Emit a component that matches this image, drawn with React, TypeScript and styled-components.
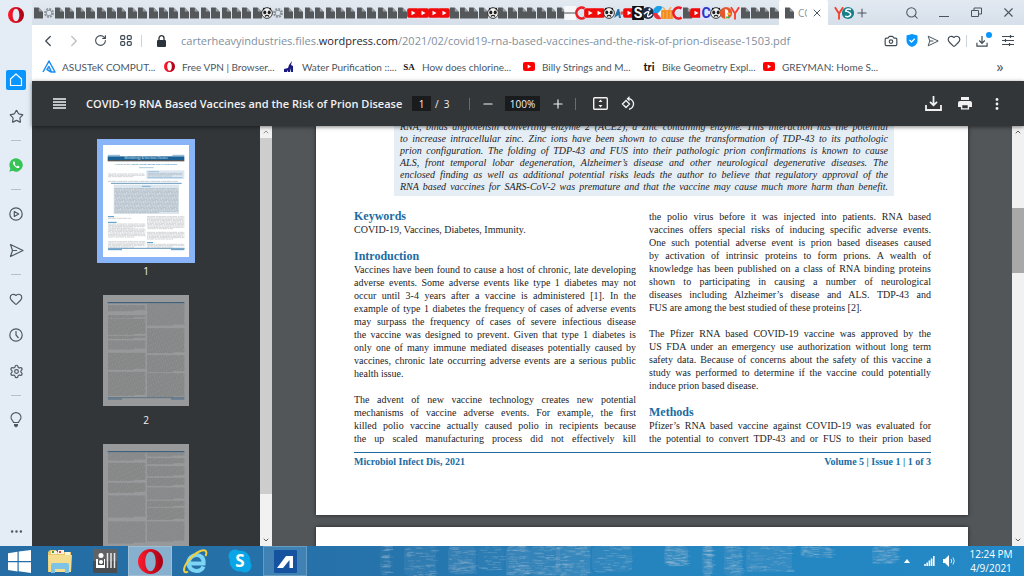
import React from "react";
import styled, { createGlobalStyle } from "styled-components";
import {
  Camera, Heart, Search, X, Minus, Plus, Settings, Star,
  ChevronLeft, ChevronRight, ChevronUp, ChevronDown, RotateCw, Ellipsis,
} from "lucide-react";

const Global = createGlobalStyle`
  * { box-sizing: border-box; }
  html, body, #root { height: 100%; margin: 0; }
  body { font-family: "Open Sans", "Noto Sans", sans-serif; overflow: hidden; }
  button { border: 0; padding: 0; background: none; color: inherit; font: inherit; display: flex; align-items: center; justify-content: center; }
  a { color: inherit; text-decoration: none; }
  svg { display: block; flex: none; }
`;

const Screen = styled.div`
  display: flex;
  flex-direction: column;
  height: 100vh;
  overflow: hidden;
`;
const Browser = styled.div`
  flex: 1;
  min-height: 0;
  display: flex;
  background: linear-gradient(#e2e9f1, #d6e0ea 25px, #e4edf6 60px);
`;

/* Side bar */
const SideBar = styled.nav`
  width: 32px;
  flex: none;
  display: flex;
  flex-direction: column;
  align-items: center;
  background: #e4edf6;
  color: #4c5863;
`;
const LogoButton = styled.button`
  height: 30px;
  width: 32px;
  margin-bottom: 32px;
`;
const SideButton = styled.button`
  height: 36px;
  width: 32px;
`;
const HomeTile = styled.span`
  width: 20px;
  height: 20px;
  border-radius: 2px;
  background: #0a96ff;
  display: grid;
  place-items: center;
`;
const SideRule = styled.hr`
  width: 10px;
  height: 1px;
  margin: 6px 0;
  border: 0;
  background: #b6c0c9;
`;
const MoreButton = styled(SideButton)`
  height: 30px;
  margin-top: auto;
`;

/* Window chrome */
const Content = styled.div`
  flex: 1;
  min-width: 0;
  display: flex;
  flex-direction: column;
`;
const TabStrip = styled.div`
  height: 25px;
  display: flex;
  align-items: stretch;
  color: #4b5560;
`;
const PackedTabs = styled.div`
  flex: 1;
  min-width: 0;
  display: grid;
  grid-template-columns: 416fr 330fr;
  padding-left: 1px;
`;
const TabGroup = styled.div`
  display: flex;
  min-width: 0;
`;
const MiniTab = styled.button`
  flex: 1;
  min-width: 0;
`;
const ActiveTab = styled.div`
  width: 49px;
  display: flex;
  align-items: center;
  padding: 0 5px;
  gap: 4px;
  background: #fff;
  border-radius: 2px 2px 0 0;
`;
const TabTitle = styled.span`
  width: 10px;
  overflow: hidden;
  white-space: nowrap;
  font-size: 10px;
  color: #8b949c;
`;
const TrailingTabs = styled.div`
  display: flex;
  width: 68px;
  padding-left: 6px;
  button { width: 9px; }
  button:last-child { width: 20px; }
`;
const WindowButton = styled.button`
  width: 32px;
`;

const AddressBar = styled.div`
  height: 31px;
  display: flex;
  align-items: center;
  background: #fff;
  color: #3f4a54;
  padding: 0 3px;
`;
const NavButton = styled.button<{ $dim?: boolean }>`
  width: 26px;
  height: 24px;
  opacity: ${(p) => (p.$dim ? 0.35 : 1)};
`;
const SiteButton = styled(NavButton)`
  width: 34px;
`;
const ToolButton = styled.button`
  position: relative;
  width: 21px;
  height: 24px;
`;
const WideTool = styled(ToolButton)`
  width: 26px;
`;
const Dot = styled.span`
  position: absolute;
  right: 3px;
  top: 3px;
  width: 6px;
  height: 6px;
  border-radius: 50%;
  background: #0a96ff;
`;
const Divider = styled.span`
  width: 1px;
  height: 12px;
  margin: 0 2px;
  background: #ccd3d9;
`;
const Address = styled.p`
  flex: 1;
  min-width: 0;
  margin: 0 0 0 3px;
  overflow: hidden;
  white-space: nowrap;
  font-size: 11px;
  line-height: 16px;
  color: #81909d;
  b { font-weight: 400; color: #1e262d; }
`;

const Bookmarks = styled.nav`
  height: 25px;
  display: flex;
  align-items: center;
  background: #fff;
  padding: 0 15px 4px 10px;
`;
const Bookmark = styled.a`
  width: 120px;
  display: flex;
  align-items: center;
  gap: 6px;
  overflow: hidden;
  white-space: nowrap;
  font-family: Lato, "Open Sans", sans-serif;
  font-size: 10px;
  line-height: 16px;
  color: #4b565f;
`;
const MarkIcon = styled.span`
  width: 14px;
  display: flex;
  justify-content: center;
  color: #111;
`;
const SerifMark = styled.b`
  font: 700 9px "Liberation Serif", serif;
`;
const SansMark = styled.b`
  font: 700 11px Lato, sans-serif;
`;
const Overflow = styled.button`
  margin-left: auto;
  width: 18px;
  font-size: 14px;
  line-height: 16px;
  color: #3f4a54;
`;

/* PDF viewer */
const PdfBar = styled.header`
  position: relative;
  z-index: 1;
  height: 45px;
  flex: none;
  display: flex;
  align-items: center;
  background: #323639;
  color: #f1f1f1;
  box-shadow: 0 1px 4px rgba(0, 0, 0, 0.5);
  font-size: 10px;
`;
const MenuButton = styled.button`
  width: 54px;
  height: 30px;
`;
const PdfTitle = styled.h1`
  margin: 0;
  width: 326px;
  white-space: nowrap;
  font-size: 11px;
  font-weight: 600;
  line-height: 16px;
`;
const PageBox = styled.input`
  width: 19px;
  height: 15px;
  border: 0;
  padding: 0;
  background: #191b1c;
  color: #f1f1f1;
  text-align: center;
  font: 500 10px "Open Sans", sans-serif;
`;
const PageTotal = styled.span`
  width: 38px;
  padding-left: 4px;
  white-space: pre;
`;
const BarRule = styled.span`
  width: 1px;
  height: 12px;
  background: #686c6f;
`;
const ZoomButton = styled.button`
  width: 35px;
  height: 28px;
`;
const ZoomBox = styled(PageBox)`
  width: 35px;
`;
const FitButton = styled.button`
  width: 28px;
  height: 28px;
`;
const FitGroup = styled.div`
  display: flex;
  padding-left: 10px;
`;
const Actions = styled.div`
  display: flex;
  margin-left: auto;
  padding-right: 11px;
`;
const ActionButton = styled.button`
  width: 32px;
  height: 28px;
`;

const Viewer = styled.div`
  flex: 1;
  min-height: 0;
  display: flex;
  background: #525659;
`;
const ThumbPanel = styled.aside`
  width: 240px;
  flex: none;
  display: flex;
  background: #323639;
`;
const ThumbList = styled.div`
  flex: 1;
  overflow: hidden;
  display: flex;
  flex-direction: column;
  align-items: center;
  padding-top: 13px;
`;
const Thumb = styled.button<{ $active?: boolean }>`
  flex: none;
  flex-direction: column;
  border: 6px solid ${(p) => (p.$active ? "#8ab4f8" : "transparent")};
`;
const ThumbLabel = styled.span`
  height: 26px;
  flex: none;
  font-size: 10px;
  line-height: 16px;
  color: #f1f1f1;
`;
const ScrollBar = styled.div`
  width: 12px;
  flex: none;
  display: flex;
  flex-direction: column;
  background: #f1f1f1;
  color: #606060;
`;
const ScrollArrow = styled.button`
  height: 12px;
  flex: none;
`;
const ScrollTrack = styled.div<{ $before: number; $size: number; $after: number }>`
  flex: 1;
  display: grid;
  grid-template-rows: ${(p) => `${p.$before}fr ${p.$size}fr ${p.$after}fr`};
`;
const ScrollThumb = styled.div<{ $tone: string }>`
  grid-row: 2;
  background: ${(p) => p.$tone};
`;

const Document = styled.main`
  flex: 1;
  min-width: 0;
  overflow: hidden;
  padding: 0 44px;
  display: flex;
  flex-direction: column;
  gap: 12px;
`;
const Sheet = styled.article`
  flex: none;
  background: #fff;
  color: #242426;
  box-shadow: 0 0 4px rgba(0, 0, 0, 0.6);
  padding: 0 37px 47px 38px;
  font-family: "Liberation Serif", serif;
  font-size: 10px;
  line-height: 13px;
`;
const NextSheet = styled(Sheet)`
  height: 200px;
`;
const Abstract = styled.div`
  margin: -5px 37px 0 40px;
  padding: 0 6px 3px;
  background: #e6eef5;
  font-style: italic;
  font-size: 10px;
  line-height: 12px;
`;
const Columns = styled.div`
  display: grid;
  grid-template-columns: 1fr 1fr;
  gap: 13px;
  padding-top: 13px;
  height: 256px;
`;
const RightColumn = styled.div`
  padding-top: 1px;
`;
const Heading = styled.h2`
  margin: 0;
  font-size: 12px;
  line-height: 14px;
  color: #1c6ba3;
`;
const Paragraph = styled.p`
  margin: 0 0 13px;
`;
const Line = styled.span<{ $ragged?: boolean }>`
  display: block;
  white-space: nowrap;
  text-align-last: ${(p) => (p.$ragged ? "left" : "justify")};
`;
const SheetFooter = styled.footer`
  display: flex;
  justify-content: space-between;
  border-top: 1px solid #1c6ba3;
  padding-top: 2px;
  font-weight: 700;
  color: #1c6ba3;
`;

/* Task bar */
const TaskBar = styled.footer`
  height: 30px;
  flex: none;
  display: flex;
  align-items: center;
  position: relative;
  background: linear-gradient(90deg, #256da4, #2672aa 35%, #2585bf 65%, #2389c6);
  color: #fff;
`;
const Ripples = styled.svg`
  position: absolute;
  right: 84px;
  top: 0;
`;
const StartButton = styled.button`
  width: 38px;
  height: 30px;
`;
const TaskButton = styled.button<{ $level?: number }>`
  width: 44px;
  height: 30px;
  margin-right: 1px;
  background: ${(p) => (p.$level ? `rgba(255,255,255,${p.$level / 100})` : "none")};
  box-shadow: ${(p) => (p.$level ? "inset 0 0 0 1px rgba(255,255,255,.2)" : "none")};
`;
const Tray = styled.div`
  margin-left: auto;
  display: flex;
  align-items: center;
  gap: 8px;
  padding-right: 12px;
  position: relative;
`;
const TrayButton = styled.button`
  height: 30px;
`;
const HiddenIcons = styled(TrayButton)`
  margin-right: 6px;
`;
const ClockText = styled.time`
  margin-left: 6px;
  width: 42px;
  font-size: 10px;
  line-height: 14px;
  display: flex;
  flex-direction: column;
  align-items: center;
  white-space: nowrap;
`;

type Kind = "doc" | "gear" | "face" | "yt" | "dash" | "ring" | "ag" | "s" | "i" | "swirl" | "gift" | "c" | "duck" | "y" | "globe";

function MiniIcon({ kind }: { kind: Kind }) {
  const small = kind === "doc" || kind === "gear" || kind === "ag";
  const letter = (t: string, bg: string, fg: string) => (
    <>
      <rect width="10" height="12" fill={bg} />
      <text x="5" y="10" textAnchor="middle" fontSize="12" fontWeight="700" fontFamily="Roboto" fill={fg}>{t}</text>
    </>
  );
  return (
    <svg width={small ? 10 : 12} height={small ? 12 : 14} viewBox="0 0 10 12">
      {kind === "doc" && <><path d="M1 .5h4.500l4.500 4.500v6.500H1z" fill="#55585b" /><path d="M5.800 .5L9.900 4.600H5.800z" fill="#9ba1a7" /></>}
      {kind === "gear" && <><circle cx="5" cy="6" r="4" fill="none" stroke="#8f959b" strokeWidth="2" strokeDasharray="2 1.100" /><circle cx="5" cy="6" r="2.800" fill="none" stroke="#8f959b" /></>}
      {kind === "face" && (
        <>
          <circle cx="5" cy="6" r="4.600" fill="#f4f4f4" stroke="#2a2a2a" strokeWidth=".8" />
          <path d="M1.500 1.500l2 .5-1.700 2zM8.500 1.500l-2 .5 1.700 2z" fill="#222" />
          <ellipse cx="3.100" cy="5.500" rx="1.300" ry="1.600" fill="#222" /><ellipse cx="6.900" cy="5.500" rx="1.300" ry="1.600" fill="#222" />
          <path d="M3.200 9q1.800-1.800 3.600 0" stroke="#222" fill="none" />
        </>
      )}
      {kind === "yt" && <><rect y="2" width="10" height="8" rx="1.500" fill="#f00a0a" /><path d="M3.700 4v4L7.200 6z" fill="#fff" /></>}
      {kind === "dash" && <><rect width="10" height="12" fill="#f6f8fa" /><path d="M0 6h10" stroke="#444" strokeWidth=".8" /></>}
      {kind === "ring" && <path d="M8.900 2.200A4.400 4.700 0 1 0 8.900 9.800" fill="none" stroke="#ee1c25" strokeWidth="2.200" />}
      {kind === "ag" && <><path d="M0 11L3.600 2h1.600L7 11H5L4.400 8z" fill="#2572a8" /><circle cx="8" cy="6" r="1.700" fill="#d55" /></>}
      {kind === "s" && letter("S", "#111", "#fff")}
      {kind === "i" && <><circle cx="5" cy="6" r="5.200" fill="#1d2d4c" /><circle cx="6.300" cy="3" r="1" fill="#fff" /><path d="M1.500 7Q5 4 5.700 5.300 4 9 5 9.200 6 9.500 8.500 7" fill="none" stroke="#fff" strokeWidth="1.200" /></>}
      {kind === "swirl" && <><path d="M9 1A5 5 0 0 0 1 6l4 1z" fill="#19a0e8" /><path d="M1 6a5 5 0 0 0 7 5L4 6z" fill="#ee2d3a" /><path d="M8.500 3L4.500 6.500 8.500 9z" fill="#fff" /></>}
      {kind === "gift" && <><path d="M0 3.500h10V11H0z" fill="#f28a1b" /><path d="M1.500 1l2 2.500M8.500 1l-2 2.500M2 5v5M8 5v5M5 4v7" stroke="#f7ab52" fill="none" strokeWidth="1.200" /></>}
      {kind === "c" && letter("C", "#dfe3ff", "#2b36c9")}
      {kind === "duck" && <><circle cx="5" cy="6" r="5.200" fill="#e8572c" /><path d="M4 2.500Q8 3 6.800 7V11H4.500z" fill="#fff" /><path d="M6 6h3v1.500H6z" fill="#f8c51c" /><path d="M5 9h3v1.500H5z" fill="#4fb54a" /></>}
      {kind === "y" && <path d="M1.500 1L5 6.500 8.500 1M5 6v5.500" fill="none" stroke="#f5402c" strokeWidth="1.600" />}
      {kind === "globe" && <><circle cx="5" cy="6" r="5.200" fill="#17808b" /><path d="M7.500 3Q3 1.800 3 4.400 7.500 5.400 7.300 7.500 6 10 2.500 8.700" fill="none" stroke="#fff" strokeWidth="1.300" /></>}
    </svg>
  );
}

const docs = (n: number): Kind[] => Array.from({ length: n }, () => "doc" as Kind);
const FIRST: Kind[] = ["doc", "gear", ...docs(20), "face", "gear", ...docs(12), "yt", "yt", "yt", "yt"];
const SECOND: Kind[] = [
  ...docs(4), "face", ...docs(7), "dash", "ring", "yt", "yt", "face", "ag", "yt", "s", "i", "swirl", "gift",
  "ring", "doc", "yt", "c", "face", "duck", "y", ...docs(4),
];

const OperaIcon = ({ size }: { size: number }) => (
  <svg width={size} height={size} viewBox="0 0 24 24">
    <defs><linearGradient id="opera" x1="0" x2="1"><stop stopColor="#ff1b2d" /><stop offset="1" stopColor="#a70014" /></linearGradient></defs>
    <path fillRule="evenodd" fill="url(#opera)" d="M12 0a12 12 0 1 0 0 24 12 12 0 0 0 0-24zm0 2.700c3 0 5 4.200 5 9.300s-2 9.300-5 9.300-5-4.200-5-9.300 2-9.300 5-9.300z" />
  </svg>
);
const YouTube = () => (
  <svg width="12" height="9" viewBox="0 0 12 9"><rect width="12" height="9" rx="2" fill="#f00" /><path d="M4.700 2.500v4L8 4.500z" fill="#fff" /></svg>
);
const Send = ({ size = 15 }: { size?: number }) => (
  <svg width={size} height={size} viewBox="0 0 15 15" fill="none" stroke="currentColor" strokeWidth="1.200" strokeLinejoin="round"><path d="M1.500 1.500L14 7.500 1.500 13.500 3.500 7.500zM3.500 7.500H8" /></svg>
);

function Bars({ x, y, n, w = 112, gap = 4, color }: { x: number; y: number; n: number; w?: number; gap?: number; color: string }) {
  return (
    <g stroke={color} strokeWidth="2" strokeDasharray="9 1 14 2 6 1">
      {Array.from({ length: n }, (_, i) => <path key={i} strokeDashoffset={i * 7} d={`M${x} ${y + i * gap}h${i === n - 1 ? w * 0.7 : w}`} />)}
    </g>
  );
}

function FirstPageThumb() {
  const g = "#bcbfc2";
  return (
    <svg width="86" height="112" viewBox="0 0 258 336">
      <rect width="258" height="336" fill="#fff" />
      <path d="M15 31h36M208 31h36" stroke="#7fb2d5" strokeWidth="3" />
      <rect x="14" y="34" width="230" height="11" fill="#1a6296" /><rect x="14" y="45" width="230" height="4" fill="#555" />
      <text x="129" y="43" textAnchor="middle" fontSize="9" fill="#d5e5f2" fontFamily="Liberation Serif">Microbiology &amp; Infectious Diseases</text>
      <text x="129" y="61" textAnchor="middle" fontSize="7" fontWeight="700" fill="#2f7fb3" fontFamily="Liberation Serif">COVID-19 RNA Based Vaccines and the Risk of Prion Disease</text>
      <path d="M108 68h44" stroke="#7fb2d5" strokeWidth="2" />
      <Bars x={15} y={87} n={3} w={110} color={g} />
      <rect x="130" y="76" width="114" height="26" fill="#dce7f1" />
      <path d="M134 80h34M134 98h104" stroke="#7fb2d5" strokeWidth="2" /><Bars x={134} y={85} n={3} w={104} color="#a9b5c0" />
      <Bars x={15} y={109} n={1} w={300} color="#a9b5c0" />
      <path d="M24 115h212" stroke="#1a6296" strokeWidth="2" />
      <rect x="32" y="119" width="196" height="88" fill="#dce6ef" /><path d="M117 124h26" stroke="#4b94c4" strokeWidth="2" />
      <Bars x={34} y={131} n={19} w={192} color="#a3acb5" />
      <path d="M15 215h18M15 232h26M132 293h18" stroke="#4b94c4" strokeWidth="3" />
      <Bars x={15} y={220} n={1} w={100} color={g} /><Bars x={15} y={237} n={4} color={g} /><Bars x={15} y={252} n={7} color={g} /><Bars x={15} y={290} n={5} color={g} />
      <Bars x={132} y={215} n={10} color={g} /><Bars x={132} y={262} n={6} color={g} /><Bars x={132} y={298} n={3} color={g} />
      <path d="M15 310h230" stroke="#1a6296" strokeWidth="2" /><path d="M15 314h42M204 314h40" stroke="#4b94c4" strokeWidth="3" />
    </svg>
  );
}

function PlainThumb({ left, right }: { left: [number, number][]; right: [number, number][] }) {
  return (
    <svg width="86" height="111" viewBox="0 0 258 333">
      <rect width="258" height="333" fill="#98999a" />
      <path d="M14 23h230" stroke="#3f617c" strokeWidth="4" />
      {left.map(([y, n]) => <Bars key={y} x={15} y={y} n={n} gap={3} color="#7b7d7f" />)}
      {right.map(([y, n]) => <Bars key={y} x={132} y={y} n={n} gap={3} color="#7b7d7f" />)}
      <path d="M14 308h230" stroke="#3f617c" strokeWidth="2" /><path d="M15 312h42M204 312h40" stroke="#4a6b85" strokeWidth="3" />
    </svg>
  );
}

/* Light reflections on the task bar's water: x, width, depth and strength of each patch */
const PATCHES: [number, number, number, number][] = [
  [0, 10, 30, 2], [24, 32, 30, 3], [68, 28, 28, 4], [98, 26, 24, 2], [126, 24, 30, 5], [150, 30, 30, 4],
  [176, 34, 30, 5], [212, 40, 26, 3], [284, 24, 20, 5], [322, 10, 30, 4], [344, 18, 30, 4], [366, 46, 26, 4],
  [420, 32, 12, 3], [492, 26, 18, 4],
];
function WaterRipples() {
  const strokes: React.ReactNode[] = [];
  let seed = 7;
  const next = () => (seed = (seed * 16807) % 2147483647) / 2147483647;
  PATCHES.forEach(([x, w, h, s], p) => {
    for (let i = 0; i < s * 16; i++) {
      const len = 2 + next() * 7;
      const left = x + next() * (w - len / 2);
      strokes.push(<path key={`${p}-${i}`} d={`M${left} ${next() * h}h${len}`} opacity={0.12 + next() * 0.22} />);
    }
  });
  return (
    <Ripples width="560" height="30" viewBox="0 0 560 30" stroke="#a9c4dc" aria-hidden>
      {PATCHES.map(([x, w, h, s]) => <rect key={x} x={x} width={w} height={h} fill="#9cb8d0" stroke="none" rx="5" opacity={s * 0.03} />)}
      {strokes}
    </Ripples>
  );
}

function Lines({ text, full }: { text: string; full?: boolean }) {
  const rows = text.split("\n");
  return (
    <Paragraph>
      {rows.map((row, i) => <Line key={row} $ragged={!full && i === rows.length - 1}>{row}</Line>)}
    </Paragraph>
  );
}

const ABSTRACT = [
  "RNA, binds angiotensin converting enzyme 2 (ACE2), a zinc containing enzyme. This interaction has the potential",
  "to increase intracellular zinc. Zinc ions have been shown to cause the transformation of TDP-43 to its pathologic",
  "prion configuration. The folding of TDP-43 and FUS into their pathologic prion confirmations is known to cause",
  "ALS, front temporal lobar degeneration, Alzheimer’s disease and other neurological degenerative diseases. The",
  "enclosed finding as well as additional potential risks leads the author to believe that regulatory approval of the",
  "RNA based vaccines for SARS-CoV-2 was premature and that the vaccine may cause much more harm than benefit.",
];
const INTRO = `Vaccines have been found to cause a host of chronic, late developing
adverse events. Some adverse events like type 1 diabetes may not
occur until 3-4 years after a vaccine is administered [1]. In the
example of type 1 diabetes the frequency of cases of adverse events
may surpass the frequency of cases of severe infectious disease
the vaccine was designed to prevent. Given that type 1 diabetes is
only one of many immune mediated diseases potentially caused by
vaccines, chronic late occurring adverse events are a serious public
health issue.`;
const ADVENT = `The advent of new vaccine technology creates new potential
mechanisms of vaccine adverse events. For example, the first
killed polio vaccine actually caused polio in recipients because
the up scaled manufacturing process did not effectively kill`;
const POLIO = `the polio virus before it was injected into patients. RNA based
vaccines offers special risks of inducing specific adverse events.
One such potential adverse event is prion based diseases caused
by activation of intrinsic proteins to form prions. A wealth of
knowledge has been published on a class of RNA binding proteins
shown to participating in causing a number of neurological
diseases including Alzheimer’s disease and ALS. TDP-43 and
FUS are among the best studied of these proteins [2].`;
const PFIZER = `The Pfizer RNA based COVID-19 vaccine was approved by the
US FDA under an emergency use authorization without long term
safety data. Because of concerns about the safety of this vaccine a
study was performed to determine if the vaccine could potentially
induce prion based disease.`;
const METHODS = `Pfizer’s RNA based vaccine against COVID-19 was evaluated for
the potential to convert TDP-43 and or FUS to their prion based`;

const asus = (
  <svg width="14" height="13" viewBox="0 0 14 13"><path d="M1 12L7 1l6 11H9.500L7 6.500 5 9.500 9 12" fill="none" stroke="#1d8cf2" strokeWidth="1.500" strokeLinejoin="round" /></svg>
);
const water = (
  <svg width="10" height="11" viewBox="0 0 10 11"><path d="M0 11V8l4-1 1-3 3-4-1 4 2 1v6H7V7L6 11H4V9l-1 2z" fill="#1a1a80" /></svg>
);
const BOOKMARKS: [React.ReactNode, string][] = [
  [asus, "ASUSTeK COMPUT..."],
  [<OperaIcon size={11} />, "Free VPN | Browser..."],
  [water, "Water Purification ::..."],
  [<SerifMark>SA</SerifMark>, "How does chlorine..."],
  [<YouTube />, "Billy Strings and M..."],
  [<SansMark>tri</SansMark>, "Bike Geometry Expl..."],
  [<YouTube />, "GREYMAN: Home S..."],
];

function Side() {
  return (
    <SideBar aria-label="Sidebar">
      <LogoButton aria-label="Opera menu"><OperaIcon size={16} /></LogoButton>
      <SideButton aria-label="Start page">
        <HomeTile><svg width="14" height="14" viewBox="0 0 14 14" fill="none" stroke="#fff" strokeWidth="1.200"><path d="M1.500 6L7 1l5.500 5v6.500h-11z" strokeLinejoin="round" /></svg></HomeTile>
      </SideButton>
      <SideButton aria-label="Bookmarks"><Star size={15} strokeWidth={1.900} /></SideButton>
      <SideRule />
      <SideButton aria-label="WhatsApp">
        <svg width="14" height="14" viewBox="0 0 14 14"><path d="M7 .3a6.700 6.700 0 1 1-3.300 12.500L.3 13.700l1-3.300A6.700 6.700 0 0 1 7 .3z" fill="#35c455" /><path d="M4.400 3.600c-1 1-.6 2.700 1.300 4.600s3.600 2.300 4.600 1.300l.2-1-1.700-.9-.9.8C6.700 8 6 7.200 5.600 6.200l.7-.9-.8-1.700z" fill="#fff" /></svg>
      </SideButton>
      <SideRule />
      <SideButton aria-label="Player">
        <svg width="14" height="14" viewBox="0 0 14 14" fill="none" stroke="currentColor" strokeWidth="1.200"><circle cx="7" cy="7" r="6.200" /><path d="M5.300 4.500v5L9.700 7z" strokeLinejoin="round" /></svg>
      </SideButton>
      <SideButton aria-label="My Flow"><Send /></SideButton>
      <SideRule />
      <SideButton aria-label="Personal news"><Heart size={14} strokeWidth={2} /></SideButton>
      <SideButton aria-label="History"><svg width="14" height="14" viewBox="0 0 14 14" fill="none" stroke="currentColor" strokeWidth="1.200"><circle cx="7" cy="7" r="6.200" /><path d="M7 3v4l2.500 3" /></svg></SideButton>
      <SideButton aria-label="Settings"><Settings size={15} strokeWidth={1.900} /></SideButton>
      <SideRule />
      <SideButton aria-label="Tips">
        <svg width="12" height="16" viewBox="0 0 12 16" fill="none" stroke="currentColor" strokeWidth="1.100"><path d="M3.500 10.500C3.500 9 1 8 1 5.400a5 4.800 0 0 1 10 0C11 8 8.500 9 8.500 10.500z" /><path d="M4 12h4v2L6 15.500 4 14z" fill="currentColor" stroke="none" /></svg>
      </SideButton>
      <MoreButton aria-label="Sidebar setup"><Ellipsis size={15} /></MoreButton>
    </SideBar>
  );
}

export default function App() {
  return (
    <Screen>
      <Global />
      <Browser>
        <Side />
        <Content>
          <TabStrip>
            <PackedTabs>
              {[FIRST, SECOND].map((group, g) => (
                <TabGroup key={g}>
                  {group.map((kind, i) => <MiniTab key={i} aria-label="Tab"><MiniIcon kind={kind} /></MiniTab>)}
                </TabGroup>
              ))}
            </PackedTabs>
            <ActiveTab><MiniIcon kind="doc" /><TabTitle>CO</TabTitle><button aria-label="Close tab"><X size={12} /></button></ActiveTab>
            <TrailingTabs>
              <button aria-label="Tab"><MiniIcon kind="y" /></button>
              <button aria-label="Tab"><MiniIcon kind="globe" /></button>
              <button aria-label="New tab"><Plus size={14} strokeWidth={1.800} /></button>
            </TrailingTabs>
            <WindowButton aria-label="Search tabs"><Search size={14} strokeWidth={1.800} /></WindowButton>
            <WindowButton aria-label="Minimize"><svg width="10" height="10" viewBox="0 0 10 10"><path d="M0 8.500h10" stroke="currentColor" /></svg></WindowButton>
            <WindowButton aria-label="Restore"><svg width="11" height="11" viewBox="0 0 11 11" fill="none" stroke="currentColor"><path d="M.5 3.500h7v6h-7zM3 3.500v-2.500h7.500v6H8" /></svg></WindowButton>
            <WindowButton aria-label="Close"><X size={15} strokeWidth={1.800} /></WindowButton>
          </TabStrip>

          <AddressBar>
            <NavButton aria-label="Back"><ChevronLeft size={18} strokeWidth={1.700} /></NavButton>
            <NavButton aria-label="Forward" $dim><ChevronRight size={18} strokeWidth={1.700} /></NavButton>
            <NavButton aria-label="Reload"><RotateCw size={13} strokeWidth={2} /></NavButton>
            <NavButton aria-label="Speed dial">
              <svg width="12" height="11" viewBox="0 0 12 11" fill="none" stroke="currentColor" strokeWidth="1.200"><rect x=".7" y=".7" width="4" height="3.600" rx="1" /><rect x="7.300" y=".7" width="4" height="3.600" rx="1" /><rect x=".7" y="6.700" width="4" height="3.600" rx="1" /><rect x="7.300" y="6.700" width="4" height="3.600" rx="1" /></svg>
            </NavButton>
            <Divider />
            <SiteButton aria-label="Site information">
              <svg width="9" height="12" viewBox="0 0 9 12"><rect y="5" width="9" height="7" rx="1" fill="#2b343c" /><path d="M2 5V3.200a2.500 2.500 0 0 1 5 0V5" fill="none" stroke="#2b343c" strokeWidth="1.300" /></svg>
            </SiteButton>
            <Address>carterheavyindustries.files.<b>wordpress.com</b>/2021/02/covid19-rna-based-vaccines-and-the-risk-of-prion-disease-1503.pdf</Address>
            <ToolButton aria-label="Snapshot"><Camera size={14} strokeWidth={2} /></ToolButton>
            <ToolButton aria-label="Ad blocker">
              <svg width="12" height="13" viewBox="0 0 12 13"><path d="M6 0l5.500 1.500v5C11.500 10 9 12 6 13 3 12 .5 10 .5 6.500v-5z" fill="#0a96ff" /><path d="M3.500 6l2 2 3.200-3.200" fill="none" stroke="#fff" strokeWidth="1.300" /></svg>
            </ToolButton>
            <ToolButton aria-label="My Flow"><Send size={12} /></ToolButton>
            <ToolButton aria-label="Add to bookmarks"><Heart size={14} strokeWidth={2} /></ToolButton>
            <Divider />
            <WideTool aria-label="Downloads">
              <svg width="12" height="12" viewBox="0 0 13 13" fill="none" stroke="currentColor" strokeWidth="1.300"><path d="M6.500 1v7.500M3.500 6l3 3 3-3M1 8.500v3.500h11V8.500" /></svg>
              <Dot />
            </WideTool>
            <WideTool aria-label="Easy setup">
              <svg width="12" height="11" viewBox="0 0 12 11" stroke="currentColor" strokeWidth="1.200"><path d="M0 1.500h12M0 5.500h12M0 9.500h12M8.500 0v3M3.500 4v3M7.500 8v3" /></svg>
            </WideTool>
          </AddressBar>

          <Bookmarks aria-label="Bookmarks bar">
            {BOOKMARKS.map(([icon, label]) => (
              <Bookmark href="#" key={label}><MarkIcon>{icon}</MarkIcon>{label}</Bookmark>
            ))}
            <Overflow aria-label="More bookmarks">»</Overflow>
          </Bookmarks>

          <PdfBar>
            <MenuButton aria-label="Menu"><svg width="13" height="11" viewBox="0 0 13 11" stroke="#f1f1f1" strokeWidth="1.400"><path d="M0 1h13M0 4h13M0 7h13M0 10h13" /></svg></MenuButton>
            <PdfTitle>COVID-19 RNA Based Vaccines and the Risk of Prion Disease</PdfTitle>
            <PageBox aria-label="Page number" defaultValue="1" />
            <PageTotal>/  3</PageTotal>
            <BarRule />
            <ZoomButton aria-label="Zoom out"><Minus size={14} /></ZoomButton>
            <ZoomBox aria-label="Zoom level" defaultValue="100%" />
            <ZoomButton aria-label="Zoom in"><Plus size={14} /></ZoomButton>
            <BarRule />
            <FitGroup>
              <FitButton aria-label="Fit to page">
                <svg width="15" height="13" viewBox="0 0 15 13"><rect x=".7" y=".7" width="13.600" height="11.600" rx="1" fill="none" stroke="#f1f1f1" strokeWidth="1.400" /><path d="M7.500 2.500L9.500 5h-4zM7.500 10.500L9.500 8h-4z" fill="#f1f1f1" /></svg>
              </FitButton>
              <FitButton aria-label="Rotate">
                <svg width="15" height="15" viewBox="0 0 15 15" fill="none" stroke="#f1f1f1" strokeWidth="1.400"><path d="M5 4.500L8.500 8 5 11.500 1.500 8zM6.500 2.700A5.300 5.300 0 1 1 8 13.200" /><path d="M8.500 0v5.400L5.600 2.700z" fill="#f1f1f1" stroke="none" /></svg>
              </FitButton>
            </FitGroup>
            <Actions>
              <ActionButton aria-label="Download">
                <svg width="17" height="15" viewBox="0 0 17 15" fill="none" stroke="#f1f1f1" strokeWidth="1.800"><path d="M1 9v5h15V9" /><path d="M8.500 0v9M5 5.800l3.500 3.500L12 5.800" /></svg>
              </ActionButton>
              <ActionButton aria-label="Print">
                <svg width="14" height="13" viewBox="0 0 14 13"><path d="M3 0h8v3H3zM2 4h10a2 2 0 0 1 2 2v4h-3V7H3v3H0V6a2 2 0 0 1 2-2z" fill="#f1f1f1" /><path d="M3.600 7.600h6.800v4.300H3.600z" fill="none" stroke="#f1f1f1" strokeWidth="1.400" /></svg>
              </ActionButton>
              <ActionButton aria-label="More actions">
                <svg width="4" height="12" viewBox="0 0 4 12" fill="#f1f1f1"><circle cx="2" cy="1.500" r="1.400" /><circle cx="2" cy="6" r="1.400" /><circle cx="2" cy="10.500" r="1.400" /></svg>
              </ActionButton>
            </Actions>
          </PdfBar>

          <Viewer>
            <ThumbPanel>
              <ThumbList>
                <Thumb $active aria-label="Page 1"><FirstPageThumb /></Thumb>
                <ThumbLabel>1</ThumbLabel>
                <Thumb aria-label="Page 2">
                  <PlainThumb left={[[32, 6], [62, 3], [73, 16], [124, 3], [138, 9], [175, 17], [232, 24]]} right={[[27, 22], [101, 25], [182, 17], [236, 24]]} />
                </Thumb>
                <ThumbLabel>2</ThumbLabel>
                <Thumb aria-label="Page 3">
                  <PlainThumb left={[[27, 8], [58, 18], [118, 10], [156, 22], [234, 22]]} right={[[27, 4], [44, 6], [68, 10], [103, 8], [132, 12], [172, 6], [193, 12], [234, 20]]} />
                </Thumb>
              </ThumbList>
              <ScrollBar>
                <ScrollArrow aria-label="Scroll up"><ChevronUp size={8} /></ScrollArrow>
                <ScrollTrack $before={0} $size={356} $after={40}><ScrollThumb $tone="#cdcdcd" /></ScrollTrack>
                <ScrollArrow aria-label="Scroll down"><ChevronDown size={8} strokeWidth={3} /></ScrollArrow>
              </ScrollBar>
            </ThumbPanel>

            <Document>
              <Sheet>
                <Abstract>{ABSTRACT.map((row) => <Line key={row}>{row}</Line>)}</Abstract>
                <Columns>
                  <div>
                    <Heading>Keywords</Heading>
                    <Lines text="COVID-19, Vaccines, Diabetes, Immunity." />
                    <Heading>Introduction</Heading>
                    <Lines text={INTRO} />
                    <Lines text={ADVENT} full />
                  </div>
                  <RightColumn>
                    <Lines text={POLIO} />
                    <Lines text={PFIZER} />
                    <Heading>Methods</Heading>
                    <Lines text={METHODS} full />
                  </RightColumn>
                </Columns>
                <SheetFooter><span>Microbiol Infect Dis, 2021</span><span>Volume 5 | Issue 1 | 1 of 3</span></SheetFooter>
              </Sheet>
              <NextSheet />
            </Document>
            <ScrollBar>
              <ScrollArrow aria-label="Scroll up"><ChevronUp size={8} strokeWidth={3} /></ScrollArrow>
              <ScrollTrack $before={70} $size={65} $after={261}><ScrollThumb $tone="#a8a8a8" /></ScrollTrack>
              <ScrollArrow aria-label="Scroll down"><ChevronDown size={8} strokeWidth={3} /></ScrollArrow>
            </ScrollBar>
          </Viewer>
        </Content>
      </Browser>

      <TaskBar>
        <WaterRipples />
        <StartButton aria-label="Start"><svg width="23" height="23" viewBox="0 0 23 23" fill="#fff"><path d="M0 3.200l9.500-1.400V11H0zM10.700 1.600L23 0v11H10.700zM0 12.200h9.500v9.200L0 20zM10.700 12.200H23V23l-12.300-1.700z" /></svg></StartButton>
        <TaskButton aria-label="File Explorer">
          <svg width="26" height="24" viewBox="0 0 26 24"><path d="M1 3l2-2h6l1 2h14v20H1z" fill="#e9c86a" /><path d="M4 2h6v3H4zM11 1h6v4h-6zM18 3h5v3h-5z" fill="#f7f2e3" /><path d="M5 2h2v2H5z" fill="#3b9a49" /><path d="M12 2h2v2h-2z" fill="#d34a35" /><path d="M1 6h24l-1 17H2z" fill="#f5dd90" /><path d="M4 24v-8q0-2 2-2h14q2 0 2 2v8h-4v-4H8v4z" fill="#7cc3e6" /></svg>
        </TaskButton>
        <TaskButton aria-label="Mixer">
          <svg width="24" height="24" viewBox="0 0 24 24"><rect width="24" height="24" fill="#4a4d50" /><rect width="24" height="12" fill="#606366" /><circle cx="8" cy="6.500" r="2.500" fill="#fff" /><path d="M3 10h2v6h6v-6h1v9H3z" fill="#fff" /><circle cx="8" cy="13" r="2" fill="#fff" /><path d="M14.500 4v15M18 4v15M21.500 4v15" stroke="#e8e8e8" strokeWidth="1.500" /></svg>
        </TaskButton>
        <TaskButton $level={45} aria-label="Opera"><OperaIcon size={25} /></TaskButton>
        <TaskButton aria-label="Internet Explorer">
          <svg width="25" height="25" viewBox="0 0 25 25" fill="none"><path d="M5.500 14.500H20.500C21 8.500 17.500 6 13.500 6S5.500 9.500 5.500 14s3.500 8 8 8c3.500 0 5.800-1.800 7-4.500" stroke="#7dd5f6" strokeWidth="4.200" /><path d="M5 22.500C1 25-1 21 4 13.500S18 0 22 1.500c2 .8 1.500 3.500.5 5.500" stroke="#f5cf3b" strokeWidth="2" /></svg>
        </TaskButton>
        <TaskButton aria-label="Skype">
          <svg width="24" height="24" viewBox="0 0 24 24"><circle cx="12" cy="12" r="10.500" fill="#0aa5e6" /><circle cx="7" cy="7" r="6.500" fill="#0aa5e6" /><circle cx="17" cy="17" r="6.500" fill="#0aa5e6" /><text x="12" y="18" textAnchor="middle" fontSize="17" fontWeight="700" fontFamily="Open Sans" fill="#fff">S</text></svg>
        </TaskButton>
        <TaskButton $level={12} aria-label="ASUS">
          <svg width="23" height="23" viewBox="0 0 23 23"><rect width="23" height="23" rx="1" fill="#1552a0" /><path d="M3 18L12 6h7v12h-3.500V10L9 18z" fill="#fff" /></svg>
        </TaskButton>
        <Tray>
          <HiddenIcons aria-label="Show hidden icons"><svg width="6" height="4" viewBox="0 0 6 4"><path d="M0 4l3-4 3 4z" fill="#fff" /></svg></HiddenIcons>
          <TrayButton aria-label="Network"><svg width="11" height="10" viewBox="0 0 11 10" stroke="#fff" strokeWidth="1.600"><path d="M1 8v2M3.200 6.500V10M5.400 4.500V10M7.600 2.500V10M9.800 0v10" /></svg></TrayButton>
          <TrayButton aria-label="Volume"><svg width="13" height="12" viewBox="0 0 13 12"><path d="M0 4h2l4-4v12L2 8H0z" fill="#fff" /><path d="M8 4q1.500 2 0 4M10 2.500q2.500 3.500 0 7" stroke="#fff" fill="none" opacity=".8" /></svg></TrayButton>
          <ClockText><span>12:24 PM</span><span>4/9/2021</span></ClockText>
        </Tray>
      </TaskBar>
    </Screen>
  );
}
